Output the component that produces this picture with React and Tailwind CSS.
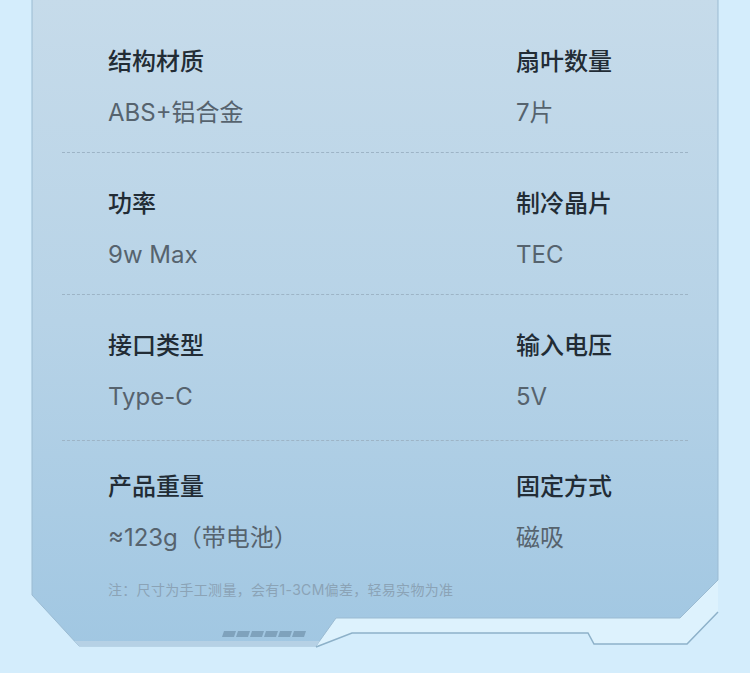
import React from "react";

const rows = [
  { l1: "结构材质", v1: "ABS+铝合金", l2: "扇叶数量", v2: "7片", cls: "pt-[35px] pb-[23px] border-b border-dashed border-[#9db4c6]" },
  { l1: "功率", v1: "9w Max", l2: "制冷晶片", v2: "TEC", cls: "pt-[35px] pb-[23px] border-b border-dashed border-[#9db4c6]" },
  { l1: "接口类型", v1: "Type-C", l2: "输入电压", v2: "5V", cls: "pt-[35px] pb-[27px] border-b border-dashed border-[#9db4c6]" },
  { l1: "产品重量", v1: "≈123g（带电池）", l2: "固定方式", v2: "磁吸", cls: "pt-[30px]" },
];

function Backdrop() {
  const dashes = [0, 1, 2, 3, 4, 5].map((i) => {
    const x = 222 + i * 14;
    return `${x + 2},631 ${x + 14},631 ${x + 12},637 ${x},637`;
  });
  return (
    <svg className="absolute left-0 top-0" width="750" height="673" viewBox="0 0 750 673">
      <defs>
        <linearGradient id="pg" x1="0" y1="0" x2="0" y2="1">
          <stop offset="0" stopColor="#c6dbea" />
          <stop offset="0.5" stopColor="#b7d3e7" />
          <stop offset="1" stopColor="#a1c7e2" />
        </linearGradient>
      </defs>
      <polygon
        points="336,618 680,618 718,580 718,612 687,644 594,644 588,633 352,633 316,647"
        fill="#ddf2fd"
      />
      <polygon
        points="32,-2 718,-2 718,580 680,618 336,618 316,646 79,646 32,595"
        fill="url(#pg)"
        stroke="#9bbbd2"
        strokeWidth="1"
      />
      <polygon points="74,641 320,641 316,646 79,646" fill="#b6d1e5" />
      <polyline
        points="316,647 352,633 588,633 594,644 687,644 718,612"
        fill="none"
        stroke="#8db1c9"
        strokeWidth="1.5"
      />
      {dashes.map((p, i) => (
        <polygon key={i} points={p} fill="#7fa2bc" />
      ))}
    </svg>
  );
}

export default function App() {
  return (
    <div
      className="relative w-[750px] h-[673px] overflow-hidden bg-[#d4edfc]"
      style={{ fontFamily: "Inter, 'Noto Sans CJK SC', 'Noto Sans', sans-serif" }}
    >
      <Backdrop />
      <div className="relative ml-[62px] w-[626px] pt-[11px]">
        {rows.map((r, i) => (
          <div key={i} className={r.cls}>
            <div className="grid grid-cols-[408px_1fr] pl-[46px] text-[24px] leading-[32px] font-medium text-[#222c35]">
              <div>{r.l1}</div>
              <div>{r.l2}</div>
            </div>
            <div className="mt-[19px] grid grid-cols-[408px_1fr] pl-[46px] text-[24px] leading-[32px] font-normal text-[#56636e]">
              <div>{r.v1}</div>
              <div>{r.v2}</div>
            </div>
          </div>
        ))}
        <div className="mt-[26px] pl-[46px] text-[14px] leading-[20px] tracking-[0.3px] text-[#8ba3b6]">
          注：尺寸为手工测量，会有1-3CM偏差，轻易实物为准
        </div>
      </div>
    </div>
  );
}
